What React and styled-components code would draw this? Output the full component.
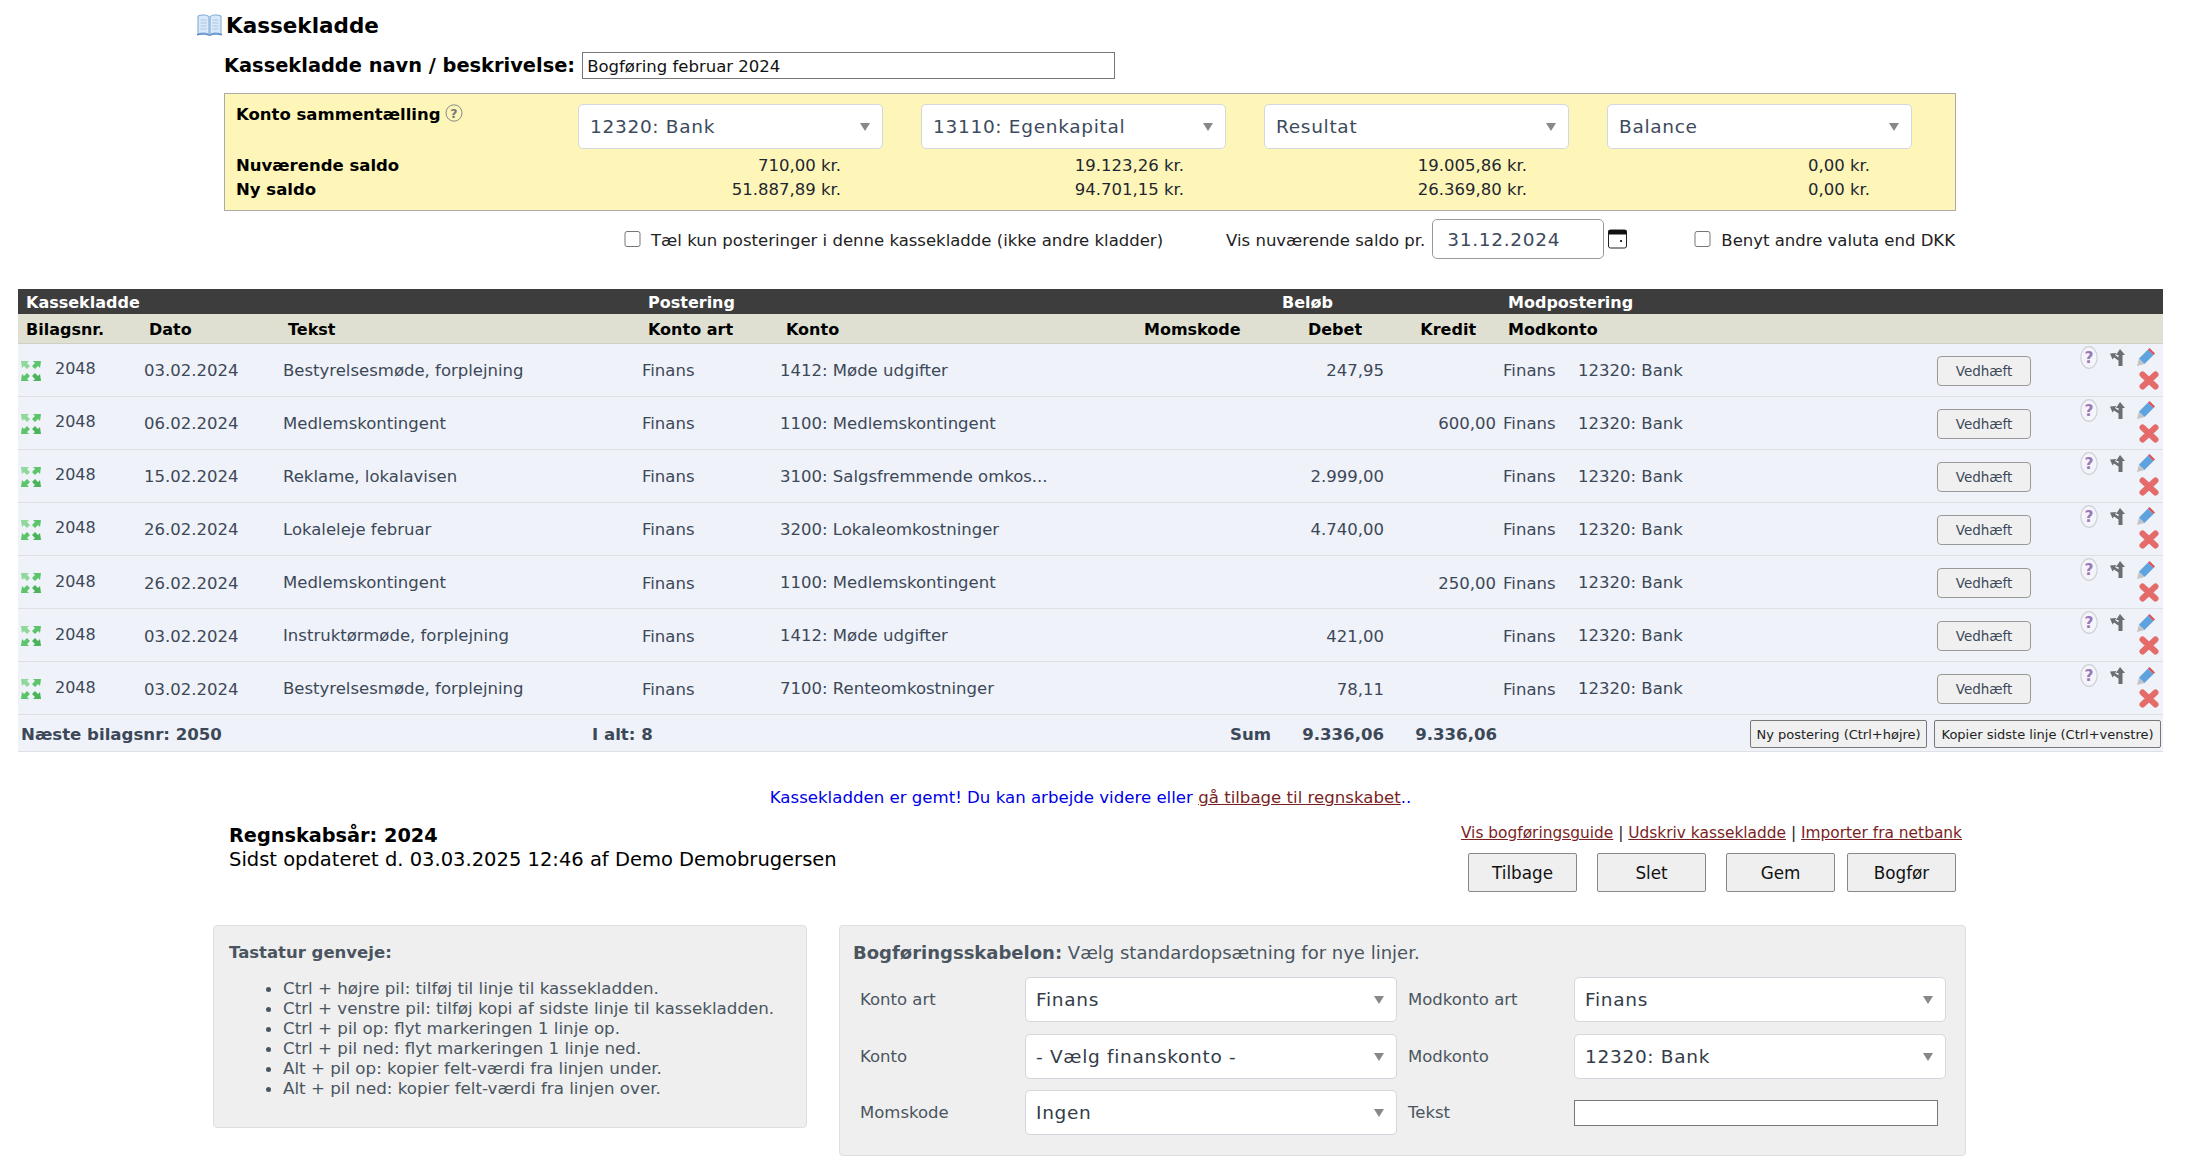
import React from "react";
import styled, { createGlobalStyle } from "styled-components";

const GlobalStyle = createGlobalStyle`
  html, body {
    margin: 0;
    padding: 0;
    background: #fff;
    font-family: "DejaVu Sans", Verdana, sans-serif;
    color: #000;
  }
`;

const Page = styled.div`
  width: 2199px;
  padding-top: 12px;
`;

const TitleRow = styled.div`
  display: flex;
  align-items: center;
  height: 26px;
  padding-left: 197px;
  gap: 4px;
`;
const Title = styled.h1`
  margin: 0;
  padding-top: 2px;
  font-size: 21.5px;
  font-weight: 700;
  line-height: 26px;
`;
const NameRow = styled.div`
  display: flex;
  align-items: center;
  margin-top: 14px;
  padding-left: 224px;
  gap: 7px;
`;
const NameLabel = styled.label`
  font-size: 19.4px;
  font-weight: 700;
`;
const TextInput = styled.input`
  box-sizing: border-box;
  width: ${(p) => p.$width}px;
  height: ${(p) => p.$height}px;
  padding: 2px 4px 0;
  border: 1px solid #777;
  border-radius: 0;
  background: #fff;
  font-family: inherit;
  font-size: 16.5px;
  color: #111;
`;

const SaldoBox = styled.div`
  box-sizing: border-box;
  display: grid;
  grid-template-columns: 342px repeat(4, 343px);
  grid-template-rows: 45px 29px 24px;
  width: 1732px;
  height: 118px;
  margin: 14px 0 0 224px;
  padding: 10px 4px 8px 11px;
  border: 1px solid #aaa;
  background: #fdf6b8;
  font-size: 16.5px;
`;
const SaldoHead = styled.div`
  display: flex;
  align-items: flex-start;
  gap: 4px;
  font-weight: 700;
  line-height: 22px;
`;
const SaldoLabel = styled.div`
  align-self: end;
  font-weight: 700;
  line-height: 24px;
`;
const SaldoValue = styled.div`
  align-self: end;
  padding-right: 80px;
  text-align: right;
  line-height: 24px;
  color: #1f2630;
`;

const SelectWrap = styled.div`
  position: relative;
  box-sizing: border-box;
  width: ${(p) => p.$width}px;
  height: 45px;
  &::after {
    content: "";
    position: absolute;
    top: 19px;
    right: 13px;
    border-style: solid;
    border-width: 8px 5px 0;
    border-color: #888 transparent transparent;
    pointer-events: none;
  }
`;
const Select = styled.select`
  appearance: none;
  box-sizing: border-box;
  width: 100%;
  height: 100%;
  padding: 0 30px 0 11px;
  border: 1px solid #d4d7dd;
  border-radius: 5px;
  background: #fff;
  font-family: inherit;
  font-size: 18.5px;
  letter-spacing: 0.7px;
  color: #3d4a5c;
`;

const OptionsRow = styled.div`
  display: flex;
  align-items: center;
  justify-content: flex-end;
  height: 40px;
  margin-top: 8px;
  padding-right: 244px;
  font-size: 16.5px;
  color: #222;
`;
const CheckLabel = styled.label`
  display: flex;
  align-items: center;
  gap: ${(p) => p.$gap || 10}px;
  padding-top: 3px;
`;
const Check = styled.input`
  width: 17px;
  height: 16px;
  margin: 0 0 4px;
`;
const SaldoDate = styled.span`
  margin-left: 63px;
  margin-right: 7px;
  padding-top: 3px;
`;
const DateInput = styled.input`
  box-sizing: border-box;
  width: 172px;
  height: 40px;
  padding: 0 14px;
  border: 1px solid #999;
  border-radius: 5px;
  font-family: inherit;
  font-size: 18.5px;
  letter-spacing: 0.7px;
  color: #3d4a5c;
`;
const IconSlot = styled.span`
  display: flex;
  margin: 0 67px 0 4px;
`;

const Table = styled.table`
  table-layout: fixed;
  border-collapse: collapse;
  width: 2145px;
  margin: 30px 0 0 18px;
  font-size: 16.5px;
  color: #3c4858;
`;
const GroupHead = styled.th`
  box-sizing: border-box;
  height: 25px;
  padding: 2px 0 0 ${(p) => p.$pad || 0}px;
  background: #3d3d3d;
  color: #fff;
  font-size: 16px;
  font-weight: 700;
  text-align: left;
`;
const ColHead = styled.th`
  box-sizing: border-box;
  height: 29px;
  padding: ${(p) => (p.$right ? "2px 25px 0 0" : `2px 0 0 ${p.$pad || 0}px`)};
  background: #e0e0d2;
  border-bottom: 1px solid #d0d0c4;
  color: #000;
  font-size: 16px;
  font-weight: 700;
  text-align: ${(p) => (p.$right ? "right" : "left")};
`;
const Row = styled.tr`
  background: #eff2f8;
  border-bottom: 1px solid #dfe0e3;
`;
const Cell = styled.td`
  box-sizing: border-box;
  height: 53.14px;
  padding: ${(p) => (p.$up ? "1px 0 0" : "2px 0 0")};
  padding-left: ${(p) => p.$pad || 0}px;
  padding-right: ${(p) => p.$right || 0}px;
  text-align: ${(p) => (p.$right ? "right" : "left")};
  white-space: nowrap;
`;
const NrCell = styled.div`
  display: flex;
  align-items: center;
  gap: 14px;
  padding-left: 3px;
`;
const NrText = styled.span`
  padding-bottom: 4px;
  font-size: 16px;
`;
const AttachButton = styled.button`
  box-sizing: border-box;
  width: 94px;
  height: 30px;
  margin-left: 7px;
  border: 1px solid #999;
  border-radius: 4px;
  background: #f0f0f0;
  font-family: inherit;
  font-size: 13.5px;
  color: #3c4858;
`;
const ActionCell = styled.td`
  box-sizing: border-box;
  height: 53.14px;
  vertical-align: top;
  padding: 2px 0 0 10px;
`;
const ActionTop = styled.div`
  display: flex;
  gap: 12px;
  align-items: center;
`;
const DeleteIcon = styled.div`
  display: flex;
  margin: 2px 0 0 59px;
`;

const FootRow = styled.tr`
  background: #eff2f8;
  border-bottom: 1px solid #dfe0e3;
  font-size: 16.6px;
  font-weight: 700;
`;
const FootCell = styled.td`
  box-sizing: border-box;
  height: 37px;
  padding: 2px ${(p) => p.$right || 0}px 0 ${(p) => p.$pad || 0}px;
  text-align: ${(p) => (p.$right ? "right" : "left")};
  white-space: nowrap;
`;
const FootButtons = styled.div`
  display: flex;
  justify-content: flex-end;
  gap: 7px;
  padding-right: 2px;
`;
const FootButton = styled.button`
  box-sizing: border-box;
  height: 28px;
  padding: 0;
  width: ${(p) => p.$width}px;
  border: 1px solid #777;
  border-radius: 2px;
  background: #f0f0f0;
  font-family: inherit;
  font-size: 13px;
  color: #222;
  white-space: nowrap;
`;

const Message = styled.div`
  margin: 36px 0 0 18px;
  width: 2145px;
  text-align: center;
  line-height: 20px;
  font-size: 16.6px;
  color: #0000e6;
`;
const BrownLink = styled.a`
  color: #7a1f1f;
  text-decoration: underline;
`;

const AccountRow = styled.div`
  display: flex;
  justify-content: space-between;
  width: 1733px;
  margin: 15px 0 0 229px;
`;
const AccountInfo = styled.div`
  padding-top: 1px;
  font-size: 19.5px;
  line-height: 24px;
  strong {
    font-size: 19.3px;
  }
`;
const AccountActions = styled.div`
  display: flex;
  flex-direction: column;
  align-items: flex-end;
`;
const Links = styled.div`
  font-size: 15.4px;
  line-height: 20px;
  color: #222;
`;
const MainButtons = styled.div`
  display: flex;
  gap: 20px;
  margin: 10px 6px 0 0;
`;
const MainButton = styled.button`
  box-sizing: border-box;
  width: 109px;
  height: 39px;
  margin-left: ${(p) => p.$tight || 0}px;
  border: 1px solid #888;
  border-radius: 2px;
  background: #efefef;
  font-family: inherit;
  font-size: 16.8px;
  color: #111;
`;

const Panels = styled.div`
  display: flex;
  align-items: flex-start;
  gap: 32px;
  margin: 33px 0 0 213px;
`;
const Panel = styled.div`
  box-sizing: border-box;
  width: ${(p) => p.$width}px;
  height: ${(p) => p.$height}px;
  padding: 17px 13px 0 ${(p) => p.$padLeft}px;
  border: 1px solid #dfdfdf;
  border-radius: 4px;
  background: #efefef;
  font-size: 16.5px;
  color: #4a5560;
`;
const PanelTitle = styled.div`
  line-height: 20px;
  font-size: ${(p) => p.$size || 16.5}px;
`;
const ShortcutList = styled.ul`
  margin: 15px 0 0;
  padding-left: 54px;
  font-size: 16.7px;
  line-height: 20px;
`;
const FormGrid = styled.div`
  display: grid;
  grid-template-columns: 165px 372px 177px 372px;
  grid-auto-rows: 45px;
  row-gap: 11.5px;
  align-items: center;
  margin: 14px 0 0 7px;
`;
const FieldLabel = styled.label`
  margin-left: ${(p) => p.$left || 0}px;
`;
const FormSelect = styled(Select)`
  padding-left: 10px;
  font-size: 18.5px;
  letter-spacing: 0.7px;
  color: #333c48;
`;

const BookIcon = () => (
  <svg width="25" height="22" viewBox="0 0 25 22">
    <path d="M1 2c4-1.5 8-1.5 11 .5v18c-3-2-7-2-11-.5z" fill="#d9e9f8" stroke="#7aa7d6" />
    <path d="M24 2c-4-1.5-8-1.5-11 .5v18c3-2 7-2 11-.5z" fill="#d9e9f8" stroke="#7aa7d6" />
    <path d="M3.5 6h6M3.5 9h6M3.5 12h6M3.5 15h6M15.5 6h6M15.5 9h6M15.5 12h6M15.5 15h6" stroke="#a9c5e4" />
    <path d="M0 20v1.5c4-1 9-1 12.500 .5 3.500-1.500 8.500-1.500 12.500-.5V20c-4-1-9-1-12.500 .5C9 19 4 19 0 20z" fill="#5b8fc9" />
  </svg>
);

const HelpIcon = () => (
  <svg width="18" height="18" viewBox="0 0 18 18">
    <ellipse cx="9" cy="9" rx="8" ry="8.200" fill="none" stroke="#8a8a8a" />
    <text x="9" y="13.500" textAnchor="middle" fontSize="12.500" fontFamily="DejaVu Sans" fill="#777">?</text>
  </svg>
);

const CalendarIcon = () => (
  <svg width="19" height="20" viewBox="0 0 19 20">
    <rect x="0.500" y="1" width="18" height="18" rx="2" fill="#fff" stroke="#222" />
    <rect x="0.500" y="1" width="18" height="4.500" fill="#111" />
    <rect x="12" y="11" width="2" height="2" fill="#333" />
  </svg>
);

const ExpandIcon = () => (
  <svg width="20" height="20" viewBox="0 0 20 20">
    <path d="M0 0h8L6 2l3 3-3 3-3-3-2 2z" fill="#8fd89a" />
    <path d="M20 0h-8l2 2-3 3 3 3 3-3 2 2z" fill="#5cc46a" />
    <path d="M0 20h8l-2-2 3-3-3-3-3 3-2-2z" fill="#5cc46a" />
    <path d="M20 20h-8l2-2-3-3 3-3 3 3 2-2z" fill="#4bb35a" />
  </svg>
);

const RowHelpIcon = () => (
  <svg width="18" height="23" viewBox="0 0 18 23">
    <ellipse cx="9" cy="11.500" rx="8.200" ry="10.800" fill="#f4f5fa" stroke="#d0d0d8" strokeWidth="1.200" />
    <text x="9" y="17" textAnchor="middle" fontSize="15.500" fontWeight="700" fontFamily="DejaVu Sans" fill="#9b78b8">?</text>
  </svg>
);

const SplitIcon = () => (
  <svg width="15" height="17" viewBox="0 0 15 17">
    <path d="M10 0l5 6h-2.500v11h-4v-5.500L4 8.500l-1.500 2L0 4.500 6.500 4 5 6l3.500 2.500V6H6z" fill="#6b6e72" />
  </svg>
);

const PencilIcon = () => (
  <svg width="18" height="18" viewBox="0 0 18 18">
    <path d="M0 18l2-7.500 5.500 5.500z" fill="#c4c4c4" />
    <path d="M2 10.500l9-9 5.500 5.500-9 9z" fill="#5ea3e0" />
    <path d="M11 1.500L12.500 0 18 5.500 16.500 7z" fill="#d94f55" />
  </svg>
);

const CrossIcon = () => (
  <svg width="20" height="19" viewBox="0 0 20 19">
    <path d="M3.500 3.500l13 12M16.500 3.500l-13 12" stroke="#e56a6a" strokeWidth="6" strokeLinecap="round" />
  </svg>
);

const lines = [
  ["03.02.2024", "Bestyrelsesmøde, forplejning", "1412: Møde udgifter", "247,95", ""],
  ["06.02.2024", "Medlemskontingent", "1100: Medlemskontingent", "", "600,00"],
  ["15.02.2024", "Reklame, lokalavisen", "3100: Salgsfremmende omkos...", "2.999,00", ""],
  ["26.02.2024", "Lokaleleje februar", "3200: Lokaleomkostninger", "4.740,00", ""],
  ["26.02.2024", "Medlemskontingent", "1100: Medlemskontingent", "", "250,00"],
  ["03.02.2024", "Instruktørmøde, forplejning", "1412: Møde udgifter", "421,00", ""],
  ["03.02.2024", "Bestyrelsesmøde, forplejning", "7100: Renteomkostninger", "78,11", ""],
];

const shortcuts = [
  "Ctrl + højre pil: tilføj til linje til kassekladden.",
  "Ctrl + venstre pil: tilføj kopi af sidste linje til kassekladden.",
  "Ctrl + pil op: flyt markeringen 1 linje op.",
  "Ctrl + pil ned: flyt markeringen 1 linje ned.",
  "Alt + pil op: kopier felt-værdi fra linjen under.",
  "Alt + pil ned: kopier felt-værdi fra linjen over.",
];

const columnWidths = [122, 140, 358, 140, 361, 136, 112, 114, 74, 355, 140, 93];

const SelectField = ({ value, width = 305, as: Comp = Select }) => (
  <SelectWrap $width={width}>
    <Comp defaultValue={value}>
      <option>{value}</option>
    </Comp>
  </SelectWrap>
);

const App = () => (
  <Page>
    <GlobalStyle />
    <TitleRow>
      <BookIcon />
      <Title>Kassekladde</Title>
    </TitleRow>
    <NameRow>
      <NameLabel>Kassekladde navn / beskrivelse:</NameLabel>
      <TextInput $width={533} $height={27} defaultValue="Bogføring februar 2024" />
    </NameRow>

    <SaldoBox>
      <SaldoHead>
        Konto sammentælling <HelpIcon />
      </SaldoHead>
      <SelectField value="12320: Bank" />
      <SelectField value="13110: Egenkapital" />
      <SelectField value="Resultat" />
      <SelectField value="Balance" />
      <SaldoLabel>Nuværende saldo</SaldoLabel>
      <SaldoValue>710,00 kr.</SaldoValue>
      <SaldoValue>19.123,26 kr.</SaldoValue>
      <SaldoValue>19.005,86 kr.</SaldoValue>
      <SaldoValue>0,00 kr.</SaldoValue>
      <SaldoLabel>Ny saldo</SaldoLabel>
      <SaldoValue>51.887,89 kr.</SaldoValue>
      <SaldoValue>94.701,15 kr.</SaldoValue>
      <SaldoValue>26.369,80 kr.</SaldoValue>
      <SaldoValue>0,00 kr.</SaldoValue>
    </SaldoBox>

    <OptionsRow>
      <CheckLabel $gap={10}>
        <Check type="checkbox" />
        Tæl kun posteringer i denne kassekladde (ikke andre kladder)
      </CheckLabel>
      <SaldoDate>Vis nuværende saldo pr.</SaldoDate>
      <DateInput defaultValue="31.12.2024" />
      <IconSlot>
        <CalendarIcon />
      </IconSlot>
      <CheckLabel>
        <Check type="checkbox" />
        Benyt andre valuta end DKK
      </CheckLabel>
    </OptionsRow>

    <Table>
      <colgroup>
        {columnWidths.map((w, i) => (
          <col key={i} width={w} />
        ))}
      </colgroup>
      <thead>
        <tr>
          <GroupHead colSpan={3} $pad={8}>Kassekladde</GroupHead>
          <GroupHead colSpan={3} $pad={10}>Postering</GroupHead>
          <GroupHead colSpan={2} $pad={7}>Beløb</GroupHead>
          <GroupHead colSpan={4} $pad={7}>Modpostering</GroupHead>
        </tr>
        <tr>
          <ColHead $pad={8}>Bilagsnr.</ColHead>
          <ColHead $pad={9}>Dato</ColHead>
          <ColHead $pad={8}>Tekst</ColHead>
          <ColHead $pad={10}>Konto art</ColHead>
          <ColHead $pad={8}>Konto</ColHead>
          <ColHead $pad={5}>Momskode</ColHead>
          <ColHead $right>Debet</ColHead>
          <ColHead $right>Kredit</ColHead>
          <ColHead colSpan={4} $pad={7}>Modkonto</ColHead>
        </tr>
      </thead>
      <tbody>
        {lines.map(([date, text, konto, debet, kredit], i) => (
          <Row key={i}>
            <Cell>
              <NrCell>
                <ExpandIcon />
                <NrText>2048</NrText>
              </NrCell>
            </Cell>
            <Cell $pad={4}>{date}</Cell>
            <Cell $up $pad={3}>{text}</Cell>
            <Cell $pad={4}>Finans</Cell>
            <Cell $up $pad={2}>{konto}</Cell>
            <Cell />
            <Cell $right={3}>{debet}</Cell>
            <Cell $right={5}>{kredit}</Cell>
            <Cell $pad={2}>Finans</Cell>
            <Cell $up $pad={3}>12320: Bank</Cell>
            <Cell>
              <AttachButton>Vedhæft</AttachButton>
            </Cell>
            <ActionCell>
              <ActionTop>
                <RowHelpIcon />
                <SplitIcon />
                <PencilIcon />
              </ActionTop>
              <DeleteIcon>
                <CrossIcon />
              </DeleteIcon>
            </ActionCell>
          </Row>
        ))}
        <FootRow>
          <FootCell colSpan={2} $pad={3}>Næste bilagsnr: 2050</FootCell>
          <FootCell $pad={312}>I alt: 8</FootCell>
          <FootCell colSpan={3} $right={4}>Sum</FootCell>
          <FootCell $right={3}>9.336,06</FootCell>
          <FootCell $right={4}>9.336,06</FootCell>
          <FootCell colSpan={4}>
            <FootButtons>
              <FootButton $width={177}>Ny postering (Ctrl+højre)</FootButton>
              <FootButton $width={227}>Kopier sidste linje (Ctrl+venstre)</FootButton>
            </FootButtons>
          </FootCell>
        </FootRow>
      </tbody>
    </Table>

    <Message>
      Kassekladden er gemt! Du kan arbejde videre eller <BrownLink>gå tilbage til regnskabet</BrownLink>..
    </Message>

    <AccountRow>
      <AccountInfo>
        <strong>Regnskabsår: 2024</strong>
        <br />
        Sidst opdateret d. 03.03.2025 12:46 af Demo Demobrugersen
      </AccountInfo>
      <AccountActions>
        <Links>
          <BrownLink>Vis bogføringsguide</BrownLink> | <BrownLink>Udskriv kassekladde</BrownLink> | <BrownLink>Importer fra netbank</BrownLink>
        </Links>
        <MainButtons>
          <MainButton>Tilbage</MainButton>
          <MainButton>Slet</MainButton>
          <MainButton>Gem</MainButton>
          <MainButton $tight={-8}>Bogfør</MainButton>
        </MainButtons>
      </AccountActions>
    </AccountRow>

    <Panels>
      <Panel $width={594} $height={203} $padLeft={15}>
        <PanelTitle>
          <strong>Tastatur genveje:</strong>
        </PanelTitle>
        <ShortcutList>
          {shortcuts.map((s) => (
            <li key={s}>{s}</li>
          ))}
        </ShortcutList>
      </Panel>
      <Panel $width={1127} $height={231} $padLeft={13}>
        <PanelTitle $size={18}>
          <strong>Bogføringsskabelon:</strong> Vælg standardopsætning for nye linjer.
        </PanelTitle>
        <FormGrid>
          <FieldLabel>Konto art</FieldLabel>
          <SelectField value="Finans" width={372} as={FormSelect} />
          <FieldLabel $left={11}>Modkonto art</FieldLabel>
          <SelectField value="Finans" width={372} as={FormSelect} />
          <FieldLabel>Konto</FieldLabel>
          <SelectField value="- Vælg finanskonto -" width={372} as={FormSelect} />
          <FieldLabel $left={11}>Modkonto</FieldLabel>
          <SelectField value="12320: Bank" width={372} as={FormSelect} />
          <FieldLabel>Momskode</FieldLabel>
          <SelectField value="Ingen" width={372} as={FormSelect} />
          <FieldLabel $left={11}>Tekst</FieldLabel>
          <TextInput $width={364} $height={26} />
        </FormGrid>
      </Panel>
    </Panels>
  </Page>
);

export default App;
